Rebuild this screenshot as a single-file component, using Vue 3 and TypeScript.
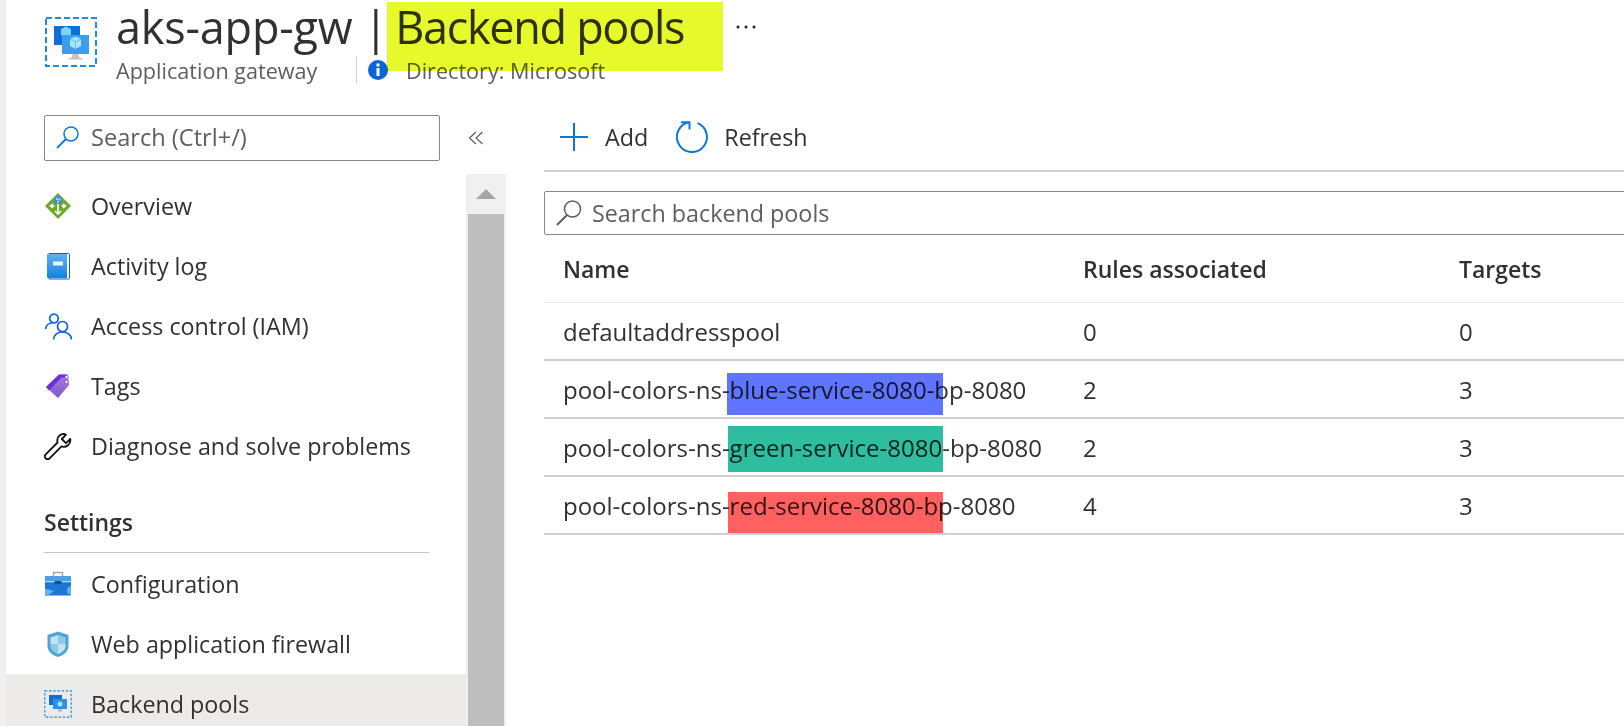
<script setup lang="ts">
interface Pool {
  name: string;
  rules: number;
  targets: number;
  mark?: 'blue' | 'green' | 'red';
}

const generalItems = [
  { key: 'overview', label: 'Overview' },
  { key: 'activity', label: 'Activity log' },
  { key: 'iam', label: 'Access control (IAM)' },
  { key: 'tags', label: 'Tags' },
  { key: 'diagnose', label: 'Diagnose and solve problems' },
];

const settingsItems = [
  { key: 'config', label: 'Configuration' },
  { key: 'waf', label: 'Web application firewall' },
  { key: 'pools', label: 'Backend pools', active: true },
];

const pools: Pool[] = [
  { name: 'defaultaddresspool', rules: 0, targets: 0 },
  { name: 'pool-colors-ns-blue-service-8080-bp-8080', rules: 2, targets: 3, mark: 'blue' },
  { name: 'pool-colors-ns-green-service-8080-bp-8080', rules: 2, targets: 3, mark: 'green' },
  { name: 'pool-colors-ns-red-service-8080-bp-8080', rules: 4, targets: 3, mark: 'red' },
];
</script>

<template>
  <div class="page">
    <header class="blade-header">
      <svg class="blade-icon" viewBox="0 0 52 50" width="52" height="50">
        <rect x="1" y="1" width="50" height="48" fill="none" stroke="#1a8fe0" stroke-width="2" stroke-dasharray="6 3" />
        <rect x="9" y="9" width="26" height="19" fill="#0f6fd6" />
        <path d="M16 12l5-2.5 5 2.500v6l-5 3-5-3z" fill="#7fd4f5" />
        <rect x="17" y="18" width="27" height="19" fill="#3d9cee" />
        <path d="M25 22l5.500-2.500 5.500 2.500v7l-5.500 3-5.500-3z" fill="#a5e6f8" />
        <path d="M25 22l5.500 2.800L36 22M30.500 24.800v7.200" stroke="#4ab4e8" fill="none" stroke-width=".8" />
        <path d="M27.500 37h6l1 4h3v1.500h-14V41h3z" fill="#c4c4c4" />
      </svg>
      <div class="blade-heading">
        <div class="title-row">
          <h1 class="title">
            <span class="title-res">aks-app-gw</span>
            <span class="title-pipe">|</span>
            <span class="title-page">Backend pools</span>
          </h1>
          <svg class="more" viewBox="0 0 22 6" width="22" height="6">
            <circle cx="3" cy="3" r="1.500" fill="#201f1e" />
            <circle cx="11" cy="3" r="1.500" fill="#201f1e" />
            <circle cx="19" cy="3" r="1.500" fill="#201f1e" />
          </svg>
        </div>
        <div class="sub-row">
          <span class="sub-type">Application gateway</span>
          <span class="sub-sep"></span>
          <svg class="info" viewBox="0 0 20 20" width="20" height="20">
            <circle cx="10" cy="10" r="10" fill="#0b63d6" />
            <rect x="8.500" y="8" width="3" height="8" fill="#fff" />
            <rect x="8.500" y="3.500" width="3" height="3" fill="#fff" />
          </svg>
          <span class="sub-dir">Directory: Microsoft</span>
        </div>
      </div>
      <span class="title-mark"></span>
    </header>

    <div class="blade-body">
      <aside class="sidebar">
        <div class="side-top">
          <div class="side-search">
            <svg viewBox="0 0 26 24" width="26" height="24">
              <circle cx="16" cy="9" r="7" fill="none" stroke="#0a78d4" stroke-width="1.500" />
              <path d="M11 14L2 23" stroke="#0a78d4" stroke-width="1.800" fill="none" />
            </svg>
            <span>Search (Ctrl+/)</span>
          </div>
          <svg class="collapse" viewBox="0 0 16 16" width="16" height="16">
            <path d="M8 2L1.500 8 8 14M14.500 2L8 8l6.500 6" fill="none" stroke="#605e5c" stroke-width="1.200" />
          </svg>
        </div>
        <div class="side-scroll">
          <nav class="side-list">
            <a v-for="item in generalItems" :key="item.key" class="side-item">
              <svg class="side-icon" viewBox="0 0 28 28" width="28" height="28">
                <template v-if="item.key === 'overview'">
                  <path d="M14 1l13 13-13 13L1 14z" fill="#6eaa2a" />
                  <path d="M14 11v11M11 19l3 3 3-3M6.500 14h4M9 12l-2.500 2L9 16M21.500 14h-4M19 12l2.500 2L19 16" stroke="#fff" stroke-width="1.600" fill="none" />
                  <circle cx="14" cy="8" r="4" fill="#3c8de0" />
                  <circle cx="12.800" cy="7" r="1" fill="#cfe6fa" />
                  <circle cx="15.400" cy="7.500" r="1" fill="#cfe6fa" />
                  <circle cx="14" cy="9.800" r="1" fill="#cfe6fa" />
                </template>
                <template v-else-if="item.key === 'activity'">
                  <path d="M5 1.500h19.500a1 1 0 0 1 1 1V26a1 1 0 0 1-1 1H5z" fill="#fff" stroke="#0b63c4" stroke-width="1" />
                  <defs>
                    <linearGradient id="bookFill" x1="0" y1="0" x2="0" y2="1">
                      <stop offset="0" stop-color="#5cb2f2" />
                      <stop offset="1" stop-color="#1583de" />
                    </linearGradient>
                  </defs>
                  <path d="M3 2h20v24H4a1 1 0 0 1-1-1z" fill="url(#bookFill)" />
                  <rect x="9" y="9.500" width="10" height="4" fill="#eef6fd" />
                </template>
                <template v-else-if="item.key === 'iam'">
                  <g fill="none" stroke="#0b63e0" stroke-width="1.700">
                    <circle cx="10" cy="6.500" r="4.300" />
                    <path d="M1.500 17c.6-3.700 3.400-6 6.500-6" />
                    <circle cx="18.500" cy="14.500" r="5" />
                    <path d="M9.500 27.500c0-4.500 4-7.500 9-7.500s9 3 9 7.500" />
                  </g>
                </template>
                <template v-else-if="item.key === 'tags'">
                  <defs>
                    <linearGradient id="tagFill" x1="0" y1="0" x2="0" y2="1">
                      <stop offset="0" stop-color="#a87fe0" />
                      <stop offset="1" stop-color="#7f57c8" />
                    </linearGradient>
                  </defs>
                  <path d="M2 15L15 2.500h9L25 13 14 26z" fill="url(#tagFill)" />
                  <path d="M2 15L15 2.500h7.500l1 3.500-6-.500L5 18.500z" fill="#6d2fd8" />
                  <circle cx="22.500" cy="5" r="1.700" fill="#fff" stroke="#6d2fd8" stroke-width=".7" />
                  <circle cx="22.500" cy="10" r="1.700" fill="#fff" stroke="#6d2fd8" stroke-width=".7" />
                </template>
                <template v-else>
                  <path d="M20 1.800a6.700 6.700 0 0 0-6.400 8.700L1.700 22.400a2.700 2.700 0 0 0 3.900 3.900l11.900-11.900A6.700 6.700 0 0 0 26.300 7L22 11.200 17.800 7l4.200-4.300a6.700 6.700 0 0 0-2-.9z" fill="none" stroke="#111" stroke-width="1.800" stroke-linejoin="round" />
                </template>
              </svg>
              <span>{{ item.label }}</span>
            </a>
            <div class="side-section">Settings</div>
            <a v-for="item in settingsItems" :key="item.key" class="side-item" :class="{ active: item.active }">
              <svg class="side-icon" viewBox="0 0 28 28" width="28" height="28">
                <template v-if="item.key === 'config'">
                  <path d="M9.500 7V2.500h9V7" fill="none" stroke="#a8a8a8" stroke-width="1.500" />
                  <rect x="1" y="6" width="26" height="5" fill="#4d9fe8" />
                  <rect x="1" y="11" width="26" height="1.200" fill="#a8dcf5" />
                  <rect x="1" y="12.200" width="26" height="13.300" fill="#1b78d8" />
                  <path d="M1 18.500l9 2.500-6 4.500H1zM27 16a5 5 0 0 0-4 5 5 5 0 0 0 4 4z" fill="#6aaeea" />
                  <rect x="10.500" y="11" width="7" height="3.200" fill="#0f4f9c" />
                </template>
                <template v-else-if="item.key === 'waf'">
                  <path d="M14 1.500l10.500 3.500v11c0 5.500-5 9.500-10.500 11C8.500 25.500 3.500 21.500 3.500 16V5z" fill="#4fa6d4" />
                  <path d="M14 5l7.500 2.500V14H14z" fill="#8ecae6" />
                  <path d="M14 5v9H6.500V7.500z" fill="#c4e3f1" />
                  <path d="M6.500 14H14v10c-3.500-1.500-7.500-4-7.500-8z" fill="#8ecae6" />
                  <path d="M14 14h7.500v2c0 4-4 6.500-7.500 8z" fill="#c4e3f1" />
                </template>
                <template v-else>
                  <rect x=".8" y=".8" width="26.400" height="26.400" fill="none" stroke="#1a8fe0" stroke-width="1.200" stroke-dasharray="2.500 1.700" />
                  <rect x="5" y="5" width="13" height="10" fill="#0f6fd6" />
                  <rect x="9" y="9" width="14" height="10" fill="#2f8fe8" />
                  <circle cx="16" cy="14" r="2.500" fill="#a5e6f8" />
                  <path d="M14.500 19h3l.8 2.500h-4.600z" fill="#b4b4b4" />
                </template>
              </svg>
              <span>{{ item.label }}</span>
            </a>
          </nav>
          <div class="scrollbar">
            <div class="scroll-btn"><span class="scroll-arrow"></span></div>
            <div class="scroll-thumb"></div>
          </div>
        </div>
      </aside>

      <main class="content">
        <div class="toolbar">
          <button class="tool">
            <svg class="add-icon" viewBox="0 0 30 30" width="30" height="30">
              <path d="M15 1v28M1 15h28" stroke="#0a78d4" stroke-width="2" fill="none" />
            </svg>
            <span>Add</span>
          </button>
          <button class="tool">
            <svg viewBox="0 0 32 32" width="32" height="32">
              <path d="M21.500 2.100A15 15 0 1 1 13 1.300" fill="none" stroke="#0a78d4" stroke-width="2" />
              <path d="M5 1.200h8.500v7.300" fill="none" stroke="#0a78d4" stroke-width="2" />
            </svg>
            <span>Refresh</span>
          </button>
        </div>
        <div class="pool-search">
          <svg viewBox="0 0 28 28" width="28" height="28">
            <circle cx="17.500" cy="10" r="8" fill="none" stroke="#605e5c" stroke-width="1.500" />
            <path d="M12 16L2 26" stroke="#605e5c" stroke-width="2" fill="none" />
          </svg>
          <span>Search backend pools</span>
        </div>
        <div class="pool-table">
          <div class="pool-row head">
            <span>Name</span>
            <span>Rules associated</span>
            <span>Targets</span>
          </div>
          <div v-for="pool in pools" :key="pool.name" class="pool-row">
            <span>{{ pool.name }}</span>
            <span>{{ pool.rules }}</span>
            <span>{{ pool.targets }}</span>
            <i v-if="pool.mark" class="mark" :class="pool.mark"></i>
          </div>
        </div>
      </main>
    </div>
  </div>
</template>

<style>
html,
body {
  margin: 0;
  background: #fff;
  overflow: hidden;
}
</style>

<style scoped>
.page {
  position: relative;
  box-sizing: border-box;
  width: 1624px;
  height: 726px;
  overflow: hidden;
  border-left: 6px solid #f0f0f0;
  font-family: "Open Sans", "Noto Sans", sans-serif;
  color: #323130;
  font-size: 23.3px;
  background: #fff;
}

.blade-header {
  position: relative;
  display: flex;
  height: 104px;
  padding: 17px 0 0 39px;
  box-sizing: border-box;
}

.blade-icon {
  flex: none;
  margin-right: 19px;
}

.blade-heading {
  display: flex;
  flex-direction: column;
  margin-top: -17px;
}

.title-row {
  display: flex;
  align-items: center;
  height: 53px;
}

.title {
  display: flex;
  margin: 0;
  font-size: 45px;
  font-weight: 400;
  line-height: 53px;
  white-space: nowrap;
}

.title-res {
  letter-spacing: -0.2px;
}

.title-pipe {
  margin-left: 11px;
}

.title-page {
  margin-left: 7px;
  letter-spacing: -1.3px;
}

.more {
  flex: none;
  margin-left: 51px;
}

.sub-row {
  display: flex;
  align-items: center;
  height: 28px;
  margin-top: 3px;
  color: #605e5c;
  font-size: 21.6px;
}

.sub-type {
  width: 240px;
}

.sub-sep {
  width: 1px;
  height: 26px;
  background: #d2d0ce;
}

.info {
  margin-left: 11px;
}

.sub-dir {
  margin-left: 18px;
}

.title-mark {
  position: absolute;
  left: 381px;
  top: 2px;
  width: 336px;
  height: 69px;
  background: #e6f92b;
  mix-blend-mode: multiply;
}

.blade-body {
  display: flex;
}

.sidebar {
  flex: none;
  width: 500px;
}

.side-top {
  display: flex;
  align-items: flex-start;
  height: 70px;
  padding: 11px 0 0 38px;
  box-sizing: border-box;
}

.side-search {
  display: flex;
  align-items: center;
  gap: 10px;
  box-sizing: border-box;
  width: 396px;
  height: 46px;
  padding: 0 0 2px 10px;
  border: 1px solid #8a8886;
  border-radius: 2px;
  color: #605e5c;
  font-size: 23.6px;
}

.collapse {
  margin: 15px 0 0 28px;
}

.side-scroll {
  display: flex;
}

.side-list {
  flex: none;
  width: 460px;
  padding-top: 1px;
}

.side-item {
  display: flex;
  align-items: center;
  gap: 19px;
  box-sizing: border-box;
  height: 60px;
  padding: 1px 0 0 38px;
}

.side-section ~ .side-item {
  padding-top: 0;
}

.side-item.active {
  background: #edebe9;
}

.side-icon {
  flex: none;
}

.side-section {
  box-sizing: border-box;
  height: 78px;
  margin: 0 37px 1px 38px;
  padding-top: 29px;
  border-bottom: 1px solid #c8c6c4;
  font-size: 23px;
  font-weight: 600;
  line-height: 36px;
}

.scrollbar {
  flex: none;
  width: 40px;
  height: 552px;
  background: #f0f0f0;
}

.scroll-btn {
  display: flex;
  align-items: center;
  justify-content: center;
  height: 40px;
}

.scroll-arrow {
  width: 0;
  height: 0;
  border-left: 10px solid transparent;
  border-right: 10px solid transparent;
  border-bottom: 10px solid #a6a6a6;
}

.scroll-thumb {
  height: 512px;
  margin: 0 2px;
  background: #bebebe;
}

.content {
  flex: none;
  width: 1090px;
  margin-left: 38px;
}

.toolbar {
  display: flex;
  gap: 28px;
  box-sizing: border-box;
  height: 68px;
  padding-left: 15px;
  align-items: center;
  border-bottom: 2px solid #d2d0ce;
}

.tool {
  display: flex;
  align-items: center;
  gap: 16px;
  padding: 0;
  border: 0;
  background: none;
  color: #323130;
  font: inherit;
}

.pool-search {
  display: flex;
  align-items: center;
  gap: 9px;
  box-sizing: border-box;
  height: 44px;
  margin-top: 19px;
  padding-left: 10px;
  border: 1px solid #8a8886;
  border-radius: 2px;
  color: #605e5c;
}

.pool-row {
  position: relative;
  display: grid;
  grid-template-columns: 520px 376px 1fr;
  align-items: center;
  box-sizing: border-box;
  height: 58px;
  padding-left: 19px;
  border-bottom: 2px solid #d2d0ce;
  font-size: 24px;
}

.pool-row.head {
  height: 68px;
  border-bottom: 1px solid #edebe9;
  font-size: 23px;
  font-weight: 600;
}

.mark {
  position: absolute;
  left: 184px;
  width: 215px;
  mix-blend-mode: multiply;
}

.mark.blue {
  left: 183px;
  width: 216px;
  top: 12px;
  height: 42px;
  background: #5f75ff;
}

.mark.green {
  top: 7px;
  height: 46px;
  background: #2fbda0;
}

.mark.red {
  top: 15px;
  height: 41px;
  background: #ff6060;
}
</style>
